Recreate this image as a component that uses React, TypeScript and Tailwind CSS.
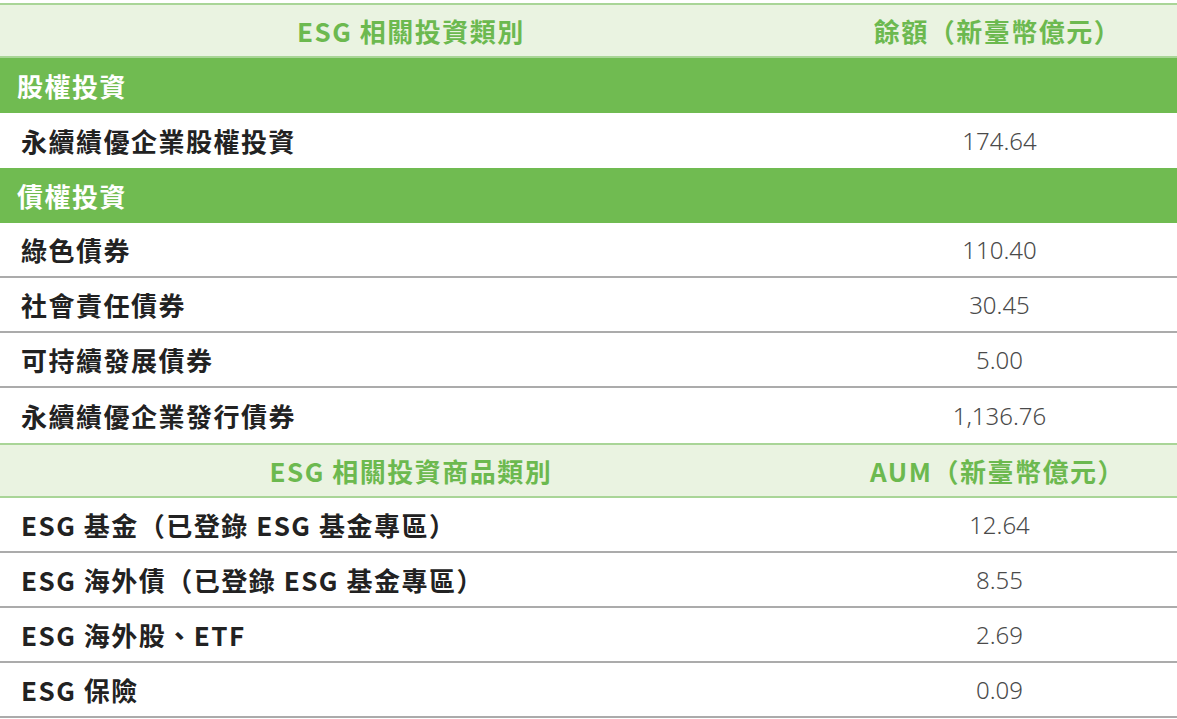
const cjk = '"Noto Sans CJK TC", "Noto Sans", sans-serif'

type Row =
  | { kind: 'head'; label: string; value: string }
  | { kind: 'section'; label: string }
  | { kind: 'item'; label: string; value: string; line?: boolean }

const rows: Row[] = [
  { kind: 'head', label: 'ESG 相關投資類別', value: '餘額（新臺幣億元）' },
  { kind: 'section', label: '股權投資' },
  { kind: 'item', label: '永續績優企業股權投資', value: '174.64' },
  { kind: 'section', label: '債權投資' },
  { kind: 'item', label: '綠色債券', value: '110.40', line: true },
  { kind: 'item', label: '社會責任債券', value: '30.45', line: true },
  { kind: 'item', label: '可持續發展債券', value: '5.00', line: true },
  { kind: 'item', label: '永續績優企業發行債券', value: '1,136.76' },
  { kind: 'head', label: 'ESG 相關投資商品類別', value: 'AUM（新臺幣億元）' },
  { kind: 'item', label: 'ESG 基金（已登錄 ESG 基金專區）', value: '12.64', line: true },
  { kind: 'item', label: 'ESG 海外債（已登錄 ESG 基金專區）', value: '8.55', line: true },
  { kind: 'item', label: 'ESG 海外股、ETF', value: '2.69', line: true },
  { kind: 'item', label: 'ESG 保險', value: '0.09', line: true },
]

export default function App() {
  return (
    <div className="w-[1177px] h-[719px] bg-white pt-[3px] overflow-hidden" style={{ fontFamily: cjk }}>
      {rows.map((r, i) => {
        if (r.kind === 'head') {
          return (
            <div
              key={i}
              className="flex h-[55px] items-center bg-[#eaf3e1] border-y-2 border-[#a9d597] text-[#6cb94f] text-[26px] font-bold tracking-[1.5px]"
            >
              <div className="w-[822px] text-center">{r.label}</div>
              <div className="flex-1 text-center pr-[4px]">{r.value}</div>
            </div>
          )
        }
        if (r.kind === 'section') {
          return (
            <div key={i} className="flex h-[55px] items-center bg-[#70bb51] pl-[17px] text-white text-[26px] font-bold tracking-[1.5px]">
              {r.label}
            </div>
          )
        }
        return (
          <div
            key={i}
            className={`flex h-[55px] items-center ${r.line ? 'border-b-2 border-[#ababab]' : ''}`}
          >
            <div className="w-[822px] pl-[21px] text-[#222] text-[26px] font-bold tracking-[1.5px]">{r.label}</div>
            <div className="flex-1 text-center text-[#4a4a4a] text-[24px] font-light" style={{ fontFamily: '"Noto Sans", sans-serif' }}>
              {r.value}
            </div>
          </div>
        )
      })}
    </div>
  )
}
